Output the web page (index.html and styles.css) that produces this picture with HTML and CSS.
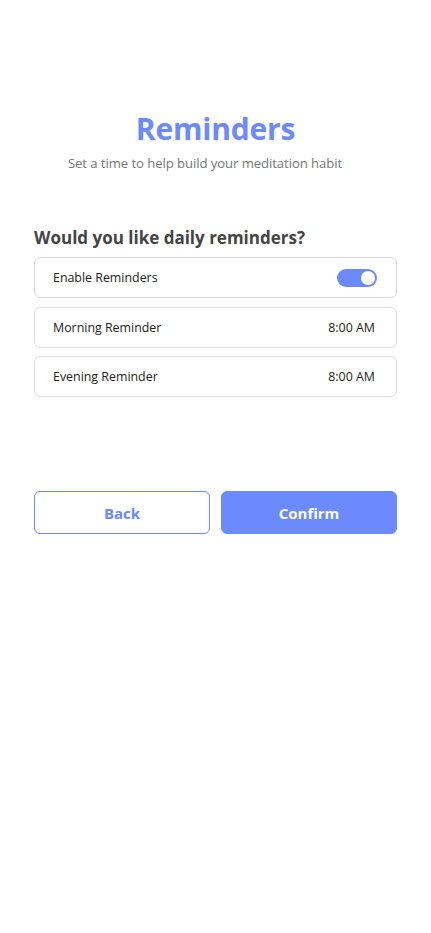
FILE: index.html
```html
<!DOCTYPE html>
<html>
<head>
<meta charset="utf-8">
<link rel="stylesheet" href="styles.css">
</head>
<body>
<main class="page">
  <header class="intro">
    <h1 class="title">Reminders</h1>
    <p class="subtitle">Set a time to help build your meditation habit</p>
  </header>
  <section class="settings">
    <h2 class="question">Would you like daily reminders?</h2>
    <div class="row">
      <span class="label">Enable Reminders</span>
      <span class="toggle"><span class="knob"></span></span>
    </div>
    <div class="row">
      <span class="label">Morning Reminder</span>
      <span class="time">8:00 AM</span>
    </div>
    <div class="row">
      <span class="label">Evening Reminder</span>
      <span class="time">8:00 AM</span>
    </div>
  </section>
  <div class="actions">
    <button class="btn btn-back">Back</button>
    <button class="btn btn-confirm">Confirm</button>
  </div>
</main>
</body>
</html>
```
FILE: styles.css
```css
* { box-sizing: border-box; }
html, body { margin: 0; padding: 0; background: #fff; }
body { font-family: "Open Sans", "Noto Sans", sans-serif; color: #222; }
.page { padding: 0 34px; width: 431px; }
.intro { padding-top: 108px; text-align: center; }
.title { margin: 0; font-size: 30px; font-weight: 700; color: #6b8afd; line-height: 42px; letter-spacing: -0.2px; }
.subtitle { margin: 4px 0 0; font-size: 13.2px; color: #777; line-height: 18px; letter-spacing: -0.1px; padding-right: 21px; }
.settings { margin-top: 54px; display: flex; flex-direction: column; gap: 8.5px; }
.question { margin: 0 0 -1.5px; font-size: 17px; font-weight: 700; color: #444; line-height: 24px; }
.row { height: 41px; border: 1px solid #d9d9d9; border-radius: 6px; display: flex; align-items: center; justify-content: space-between; padding: 0 19px 0 18px; }
.label { font-size: 12.4px; color: #222; }
.time { font-size: 12.4px; color: #222; padding-right: 2px; }
.toggle { width: 40px; height: 18px; border-radius: 9px; background: #6b8afd; position: relative; display: block; }
.knob { position: absolute; right: 2px; top: 2px; width: 14px; height: 14px; border-radius: 50%; background: #fff; }
.actions { margin-top: 94px; display: flex; gap: 11px; }
.btn { flex: 1; height: 43px; border-radius: 6px; font-family: inherit; font-size: 15px; font-weight: 700; cursor: pointer; }
.btn-back { background: #fff; border: 1px solid #6b8afd; color: #6b8afd; }
.btn-confirm { background: #6b8afd; border: 1px solid #6b8afd; color: #fff; }
```
